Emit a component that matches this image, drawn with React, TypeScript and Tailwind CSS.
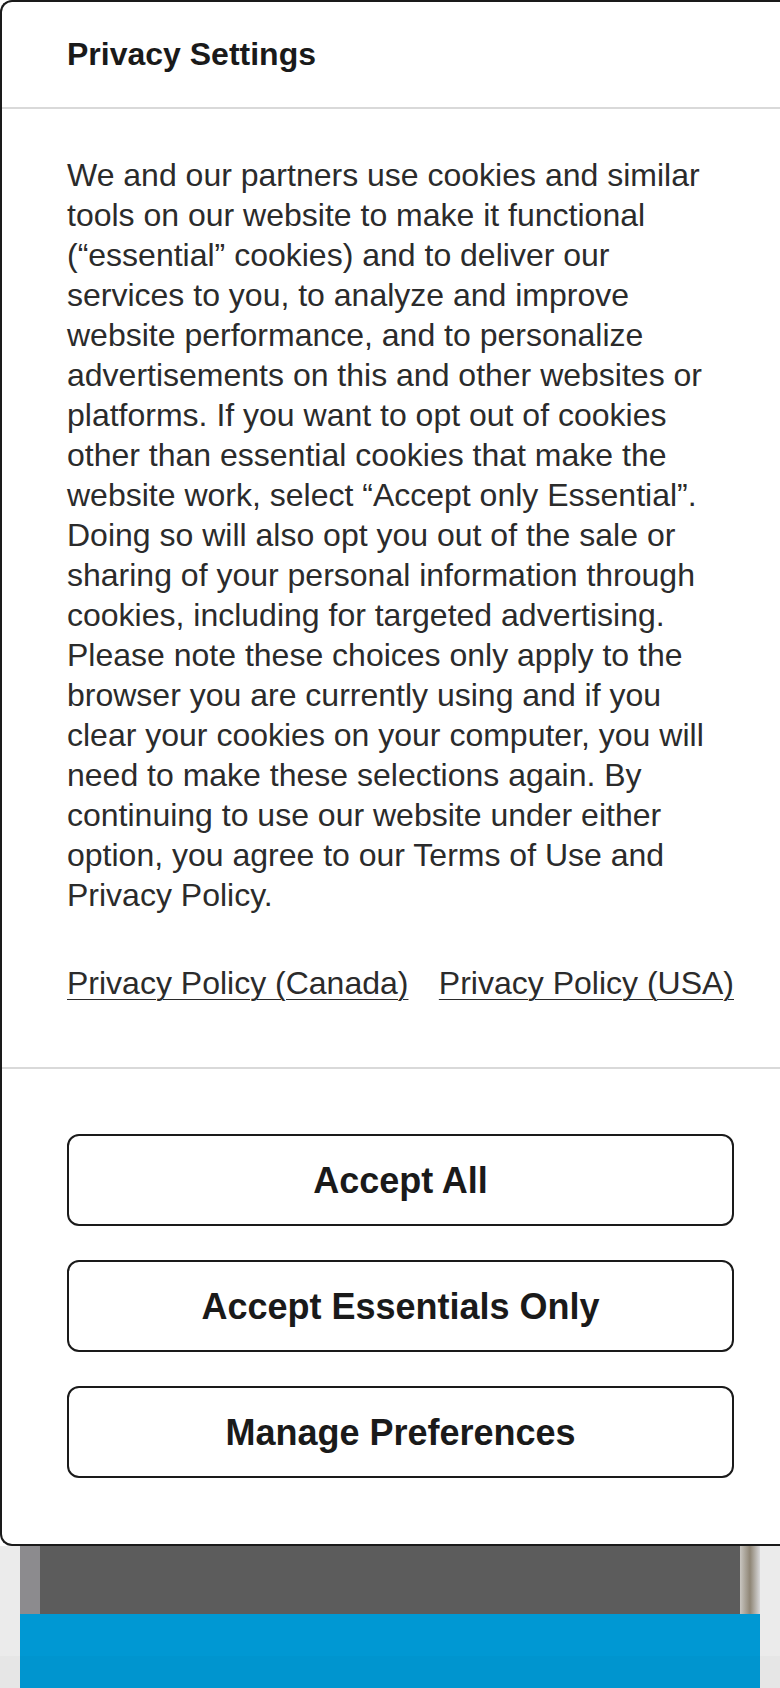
import React from "react";

const body =
  "We and our partners use cookies and similar tools on our website to make it functional (“essential” cookies) and to deliver our services to you, to analyze and improve website performance, and to personalize advertisements on this and other websites or platforms. If you want to opt out of cookies other than essential cookies that make the website work, select “Accept only Essential”. Doing so will also opt you out of the sale or sharing of your personal information through cookies, including for targeted advertising. Please note these choices only apply to the browser you are currently using and if you clear your cookies on your computer, you will need to make these selections again. By continuing to use our website under either option, you agree to our Terms of Use and Privacy Policy.";

const buttons = ["Accept All", "Accept Essentials Only", "Manage Preferences"];

export default function App() {
  return (
    <div className="w-full overflow-hidden bg-[#ebebeb] font-['Liberation_Sans',Arial,sans-serif] text-[#1a1a1a]">
      {/* Privacy modal */}
      <div className="bg-white">
        <div className="bg-white border-2 border-r-0 border-[#1a1a1a] rounded-tl-[12px] rounded-bl-[12px]">
          <div className="pl-[65px] pt-[32px] pb-[33px] border-b-2 border-[#d9d9d9]">
            <h2 className="text-[32px] leading-[40px] font-bold">Privacy Settings</h2>
          </div>

          <div className="pl-[65px] pt-[46px] pb-[64px] border-b-2 border-[#d9d9d9]">
            <p className="w-[667px] text-[32px] leading-[40px] text-[#2b2b2b]">{body}</p>
            <div className="mt-[48px] w-[667px] flex justify-between text-[32px] leading-[40px] text-[#2b2b2b]">
              <a href="#" className="underline decoration-1 underline-offset-[5px]">
                Privacy Policy (Canada)
              </a>
              <a href="#" className="underline decoration-1 underline-offset-[5px]">
                Privacy Policy (USA)
              </a>
            </div>
          </div>

          <div className="pl-[65px] pt-[65px] pb-[66px] flex flex-col gap-[34px]">
            {buttons.map((label) => (
              <button
                key={label}
                className="w-[667px] h-[92px] border-2 border-[#1a1a1a] rounded-[12px] bg-white flex items-center justify-center pt-[2px] text-[36px] font-bold text-[#1a1a1a]"
              >
                {label}
              </button>
            ))}
          </div>
        </div>
      </div>

      {/* Page behind the modal */}
      <div className="px-[20px]">
        <div className="h-[68px] flex">
          <div className="w-[20px] bg-[#8c8b8e]" />
          <div className="flex-1 bg-[#5c5c5c]" />
          <div className="w-[20px] bg-gradient-to-r from-[#c9c6c1] via-[#8f8676] to-[#d8d8da]" />
        </div>
        <div className="h-[42px] bg-[#0098d3]" />
      </div>
      <div className="px-[20px] bg-[#e6e6e6]">
        <div className="h-[32px] bg-[#0095cf]" />
      </div>
    </div>
  );
}
